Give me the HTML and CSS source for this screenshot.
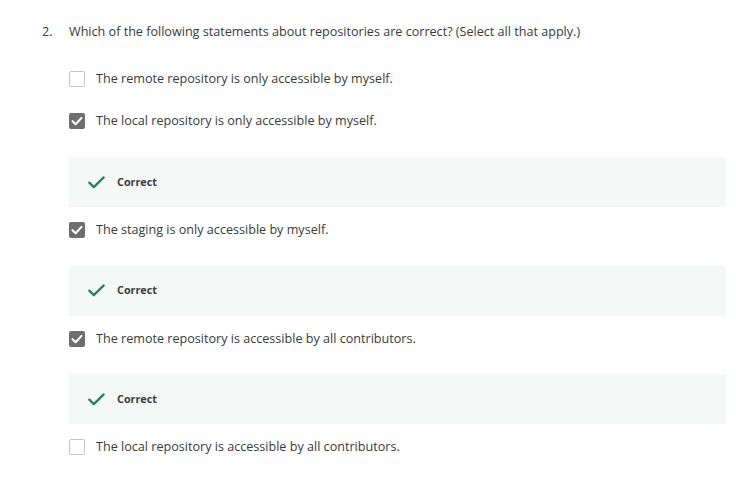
FILE: index.html
```html
<!DOCTYPE html>
<html>
<head>
<meta charset="utf-8">
<link rel="stylesheet" href="styles.css">
</head>
<body>
<div class="question">
  <div class="q-head">
    <span class="q-num">2.</span>
    <span class="q-text">Which of the following statements about repositories are correct? (Select all that apply.)</span>
  </div>
  <div class="options">
    <div class="option">
      <span class="box"></span>
      <span class="label">The remote repository is only accessible by myself.</span>
    </div>
    <div class="option">
      <span class="box checked"><svg viewBox="0 0 16 16" width="16" height="16"><path d="M3.5 8.2 L6.6 11.2 L12.5 4.9" fill="none" stroke="#fff" stroke-width="2.1" stroke-linecap="round" stroke-linejoin="round"/></svg></span>
      <span class="label">The local repository is only accessible by myself.</span>
    </div>
    <div class="feedback">
      <svg class="tick" viewBox="0 0 17 13" width="17" height="13"><path d="M1.3 6.6 L5.8 11.1 L15.7 1.4" fill="none" stroke="#1f8354" stroke-width="2.2" stroke-linecap="round" stroke-linejoin="round"/></svg>
      <span class="fb-text">Correct</span>
    </div>
    <div class="option">
      <span class="box checked"><svg viewBox="0 0 16 16" width="16" height="16"><path d="M3.5 8.2 L6.6 11.2 L12.5 4.9" fill="none" stroke="#fff" stroke-width="2.1" stroke-linecap="round" stroke-linejoin="round"/></svg></span>
      <span class="label">The staging is only accessible by myself.</span>
    </div>
    <div class="feedback">
      <svg class="tick" viewBox="0 0 17 13" width="17" height="13"><path d="M1.3 6.6 L5.8 11.1 L15.7 1.4" fill="none" stroke="#1f8354" stroke-width="2.2" stroke-linecap="round" stroke-linejoin="round"/></svg>
      <span class="fb-text">Correct</span>
    </div>
    <div class="option">
      <span class="box checked"><svg viewBox="0 0 16 16" width="16" height="16"><path d="M3.5 8.2 L6.6 11.2 L12.5 4.9" fill="none" stroke="#fff" stroke-width="2.1" stroke-linecap="round" stroke-linejoin="round"/></svg></span>
      <span class="label">The remote repository is accessible by all contributors.</span>
    </div>
    <div class="feedback">
      <svg class="tick" viewBox="0 0 17 13" width="17" height="13"><path d="M1.3 6.6 L5.8 11.1 L15.7 1.4" fill="none" stroke="#1f8354" stroke-width="2.2" stroke-linecap="round" stroke-linejoin="round"/></svg>
      <span class="fb-text">Correct</span>
    </div>
    <div class="option">
      <span class="box"></span>
      <span class="label">The local repository is accessible by all contributors.</span>
    </div>
  </div>
</div>
</body>
</html>
```
FILE: styles.css
```css
html, body {
  margin: 0;
  padding: 0;
  background: #fff;
}
body {
  font-family: "Open Sans", "Liberation Sans", sans-serif;
  color: #373a3c;
  font-size: 12.6px;
}
.question {
  padding: 22px 10px 0 42px;
}
.q-head {
  display: flex;
  line-height: 20px;
  height: 20px;
}
.q-num {
  width: 27px;
  flex: none;
}
.options {
  margin-left: 27px;
  margin-top: 15px;
}
.option {
  display: flex;
  align-items: center;
  box-sizing: border-box;
  height: 42px;
  padding-top: 2px;
}
.feedback + .option {
  padding-top: 3px;
}
.box {
  width: 16px;
  height: 16px;
  box-sizing: border-box;
  border: 1.5px solid #c6c6c6;
  border-radius: 2px;
  margin-right: 11px;
  flex: none;
  display: flex;
  align-items: center;
  justify-content: center;
  background: #fff;
}
.box.checked {
  border: none;
  background: #6e6e6e;
}
.box svg {
  display: block;
}
.label {
  line-height: 20px;
}
.feedback {
  display: flex;
  align-items: center;
  height: 50px;
  margin-top: 16px;
  margin-bottom: 0.5px;
  background: #f4f9f7;
  padding-left: 19px;
}
.tick {
  display: block;
  margin-right: 12px;
}
.fb-text {
  font-size: 10.8px;
  font-weight: 700;
  color: #3b3b3b;
  margin-bottom: 2px;
}
```
